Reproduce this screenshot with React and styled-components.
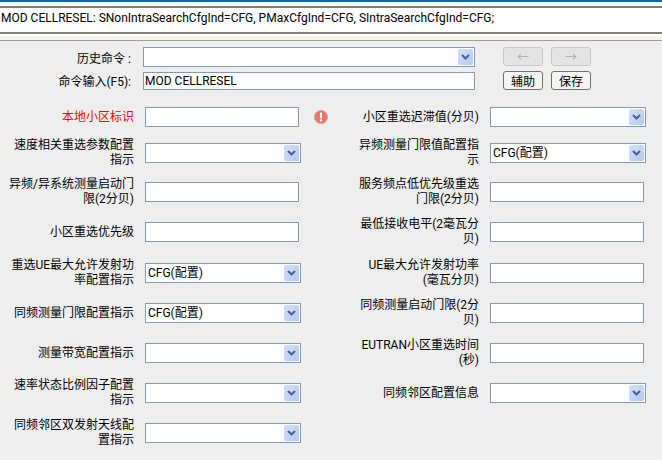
import styled, { createGlobalStyle } from "styled-components";

const leftFields = [
  { label: "本地小区标识", type: "input", required: true },
  { label: "速度相关重选参数配置\n指示", type: "select" },
  { label: "异频/异系统测量启动门\n限(2分贝)", type: "input" },
  { label: "小区重选优先级", type: "input" },
  { label: "重选UE最大允许发射功\n率配置指示", type: "select", value: "CFG(配置)" },
  { label: "同频测量门限配置指示", type: "select", value: "CFG(配置)" },
  { label: "测量带宽配置指示", type: "select" },
  { label: "速率状态比例因子配置\n指示", type: "select" },
  { label: "同频邻区双发射天线配\n置指示", type: "select" },
];

const rightFields = [
  { label: "小区重选迟滞值(分贝)", type: "select" },
  { label: "异频测量门限值配置指\n示", type: "select", value: "CFG(配置)" },
  { label: "服务频点低优先级重选\n门限(2分贝)", type: "input" },
  { label: "最低接收电平(2毫瓦分\n贝)", type: "input" },
  { label: "UE最大允许发射功率\n(毫瓦分贝)", type: "input" },
  { label: "同频测量启动门限(2分\n贝)", type: "input" },
  { label: "EUTRAN小区重选时间\n(秒)", type: "input" },
  { label: "同频邻区配置信息", type: "select" },
];

function Chevron() {
  return (
    <svg width="9" height="6" viewBox="0 0 9 6">
      <path d="M1 1l3.5 3.5L8 1" fill="none" stroke="#4d6185" strokeWidth="2" />
    </svg>
  );
}

function Select({ value, wide }) {
  return (
    <SelectBox $wide={wide}>
      <span>{value}</span>
      <ArrowButton>
        <Chevron />
      </ArrowButton>
    </SelectBox>
  );
}

function ErrorIcon() {
  return (
    <ErrorMark width="14" height="14" viewBox="0 0 14 14">
      <circle cx="7" cy="7" r="6.6" fill="#e8786c" stroke="#d9a08f" strokeWidth="0.8" />
      <rect x="6" y="2.6" width="2" height="5.6" fill="#fff" />
      <rect x="6" y="9.4" width="2" height="2" fill="#fff" />
    </ErrorMark>
  );
}

function Field({ field }) {
  return (
    <FieldRow>
      <FieldLabel $required={field.required}>{field.label}</FieldLabel>
      {field.type === "select" ? <Select value={field.value} /> : <TextBox />}
      {field.required && <ErrorIcon />}
    </FieldRow>
  );
}

export default function App() {
  return (
    <>
      <GlobalStyle />
      <Page>
        <TopLine />
        <CommandEcho>
          MOD CELLRESEL: SNonIntraSearchCfgInd=CFG, PMaxCfgInd=CFG, SIntraSearchCfgInd=CFG;
        </CommandEcho>
        <Separator />
        <CommandArea>
          <CommandLabel>历史命令 :</CommandLabel>
          <Select wide />
          <ButtonGroup>
            <PanelButton disabled>←</PanelButton>
            <PanelButton disabled>→</PanelButton>
          </ButtonGroup>
          <CommandLabel>命令输入(F5):</CommandLabel>
          <CommandInput>MOD CELLRESEL</CommandInput>
          <ButtonGroup>
            <PanelButton>辅助</PanelButton>
            <PanelButton>保存</PanelButton>
          </ButtonGroup>
        </CommandArea>
        <FormGrid>
          <FieldColumn>
            {leftFields.map((field) => (
              <Field key={field.label} field={field} />
            ))}
          </FieldColumn>
          <FieldColumn>
            {rightFields.map((field) => (
              <Field key={field.label} field={field} />
            ))}
          </FieldColumn>
        </FormGrid>
      </Page>
    </>
  );
}

const GlobalStyle = createGlobalStyle`
  html, body {
    margin: 0;
    padding: 0;
    background: #eeeeee;
  }
  * {
    box-sizing: border-box;
  }
`;

const Page = styled.div`
  width: 662px;
  height: 460px;
  overflow: hidden;
  background: #eeeeee;
  color: #000;
  font-family: Roboto, "Noto Sans CJK SC", sans-serif;
  font-size: 12px;
`;

const TopLine = styled.div`
  height: 6px;
  background: #fff;
  border-top: 2px solid #0a6cb0;
`;

const CommandEcho = styled.div`
  height: 28px;
  padding: 3px 0 0 1px;
  background: #fff;
  border-top: 2px solid #808080;
  border-bottom: 2px solid #808080;
  line-height: 15px;
  white-space: nowrap;
`;

const Separator = styled.div`
  height: 7px;
  background: linear-gradient(#fff 2px, #f3f1e4 2px);
  border-bottom: 1px solid #a0a0a0;
`;

const CommandArea = styled.div`
  display: grid;
  grid-template-columns: 143px 332px auto;
  grid-template-rows: 20px 19px;
  justify-content: start;
  row-gap: 4px;
  margin-top: 6px;
  align-items: center;
`;

const CommandLabel = styled.div`
  padding-right: 12px;
  text-align: right;
`;

const ButtonGroup = styled.div`
  display: flex;
  align-self: start;
  gap: 8px;
  margin-left: 28px;
`;

const CommandInput = styled.div`
  height: 18px;
  margin-top: 1px;
  padding-left: 1px;
  background: #fff;
  border: 1px solid #7f9db9;
  line-height: 16px;
`;

const PanelButton = styled.button`
  width: 40px;
  height: 19px;
  padding: 0;
  background: ${(p) => (p.disabled ? "#e3e3e3" : "#f4f4f0")};
  border: 1px solid ${(p) => (p.disabled ? "#c8c8c8" : "#707070")};
  border-radius: 3px;
  color: ${(p) => (p.disabled ? "#a8a8a8" : "#000")};
  font-family: "Noto Sans CJK SC", sans-serif;
  font-size: 12px;
  line-height: 16px;
`;

const FormGrid = styled.div`
  display: grid;
  grid-template-columns: 345px 317px;
  margin-top: 17px;
`;

const FieldColumn = styled.div`
  display: grid;
  grid-template-rows: 36px 39px 40px 41px 40px 40px 40px 40px 40px;
`;

const FieldRow = styled.div`
  display: flex;
  align-items: center;
  gap: 11px;
  height: 20px;
`;

const FieldLabel = styled.div`
  flex: none;
  width: 134px;
  text-align: right;
  line-height: 15px;
  white-space: pre-line;
  color: ${(p) => (p.$required ? "#ff0000" : "#000")};
`;

const TextBox = styled.div`
  flex: none;
  width: 154px;
  height: 20px;
  background: #fff;
  border: 1px solid #7f9db9;
`;

const SelectBox = styled.div`
  flex: none;
  display: flex;
  align-items: center;
  justify-content: space-between;
  width: ${(p) => (p.$wide ? "332px" : "156px")};
  height: 20px;
  padding: 0 1px 0 2px;
  background: #fff;
  border: 1px solid #7f9db9;
  line-height: 16px;
`;

const ArrowButton = styled.div`
  display: flex;
  align-items: center;
  justify-content: center;
  width: 15px;
  height: 16px;
  border-radius: 2px;
  background: linear-gradient(135deg, #d3e1fb, #b2c9f5);
`;

const ErrorMark = styled.svg`
  flex: none;
  margin-left: 4px;
`;
